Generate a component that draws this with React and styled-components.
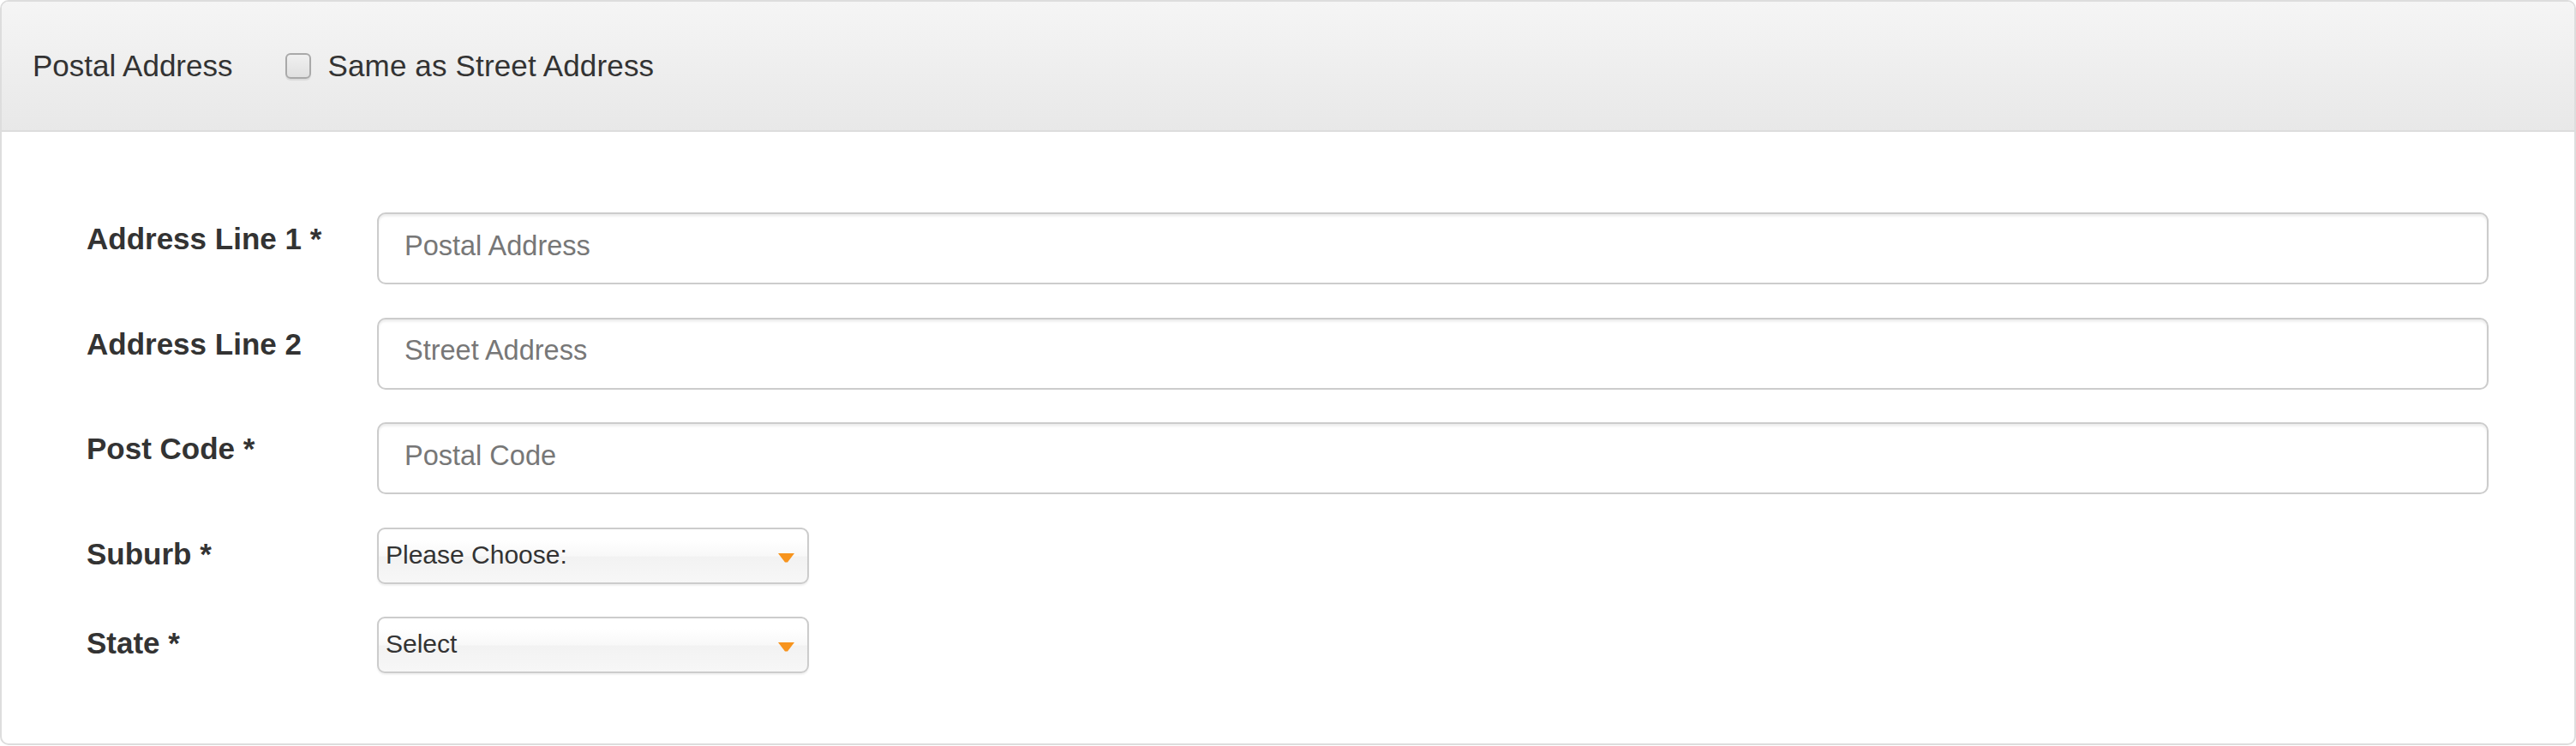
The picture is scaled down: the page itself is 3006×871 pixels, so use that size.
import React from "react";
import styled, { createGlobalStyle } from "styled-components";

const Global = createGlobalStyle`
  html, body { margin: 0; padding: 0; background: #fff; }
  body { font-family: "Liberation Sans", Arial, sans-serif; color: #333; }
  * { box-sizing: border-box; }
`;

const Panel = styled.div`
  width: 3006px;
  height: 870px;
  border: 2px solid #ddd;
  border-radius: 10px;
  overflow: hidden;
  background: #fff;
  display: flex;
  flex-direction: column;
`;

const Heading = styled.div`
  height: 152px;
  flex: none;
  display: flex;
  align-items: center;
  padding: 0 36px;
  background: linear-gradient(#f5f5f5, #e8e8e8);
  border-bottom: 2px solid #ddd;
  font-size: 35px;
  color: #333;
`;

const Title = styled.span`
  margin-right: 62px;
`;

const CheckLabel = styled.label`
  display: flex;
  align-items: center;
  gap: 19px;
  letter-spacing: 0.15px;
`;

const Box = styled.span`
  width: 30px;
  height: 30px;
  border-radius: 6px;
  border: 2px solid #a9a9a9;
  background: linear-gradient(#f0f0f0, #e0e0e0);
  box-shadow: 0 2px 1px rgba(0, 0, 0, 0.08);
  display: inline-block;
`;

const Body = styled.div`
  padding: 94px 100px 0 99px;
  display: grid;
  grid-template-columns: 339px 1fr;
  row-gap: 38.5px;
  align-items: start;
`;

const Label = styled.label`
  font-weight: bold;
  font-size: 35px;
  line-height: 40px;
  padding-top: 11px;
  color: #333;
`;

const Input = styled.input`
  height: 84px;
  width: 100%;
  border: 2px solid #ccc;
  border-radius: 10px;
  box-shadow: inset 0 2.5px 2.5px rgba(0, 0, 0, 0.075);
  padding: 0 30px 6px 30px;
  font-family: "Liberation Sans", Arial, sans-serif;
  font-size: 32.5px;
  color: #555;
  outline: none;
  &::placeholder { color: #777; }
`;

const Select = styled.div`
  position: relative;
  width: 504px;
  height: 66px;
  border: 2px solid #ccc;
  border-radius: 9px;
  background: linear-gradient(#fff 20%, #f8f8f8 50%, #f2f2f2 52%, #f7f7f7 100%);
  box-shadow: 0 2px 2px rgba(0, 0, 0, 0.06);
  display: flex;
  align-items: center;
  padding: 0 40px 2px 8px;
  font-size: 30px;
  color: #333;
`;

const Arrow = styled.svg`
  position: absolute;
  right: 15px;
  top: 50%;
  margin-top: -3px;
  width: 19px;
  height: 11px;
`;

const TextRow = ({ label, placeholder }) => (
  <>
    <Label>{label}</Label>
    <Input placeholder={placeholder} />
  </>
);

const SelectRow = ({ label, value }) => (
  <>
    <Label>{label}</Label>
    <Select>
      {value}
      <Arrow viewBox="0 0 19 11">
        <path d="M0 0 H19 L11 10.5 H8 Z" fill="#f7941d" />
      </Arrow>
    </Select>
  </>
);

export default function App() {
  return (
    <>
      <Global />
      <Panel>
        <Heading>
          <Title>Postal Address</Title>
          <CheckLabel>
            <Box />
            Same as Street Address
          </CheckLabel>
        </Heading>
        <Body>
          <TextRow label="Address Line 1 *" placeholder="Postal Address" />
          <TextRow label="Address Line 2" placeholder="Street Address" />
          <TextRow label="Post Code *" placeholder="Postal Code" />
          <SelectRow label="Suburb *" value="Please Choose:" />
          <SelectRow label="State *" value="Select" />
        </Body>
      </Panel>
    </>
  );
}
